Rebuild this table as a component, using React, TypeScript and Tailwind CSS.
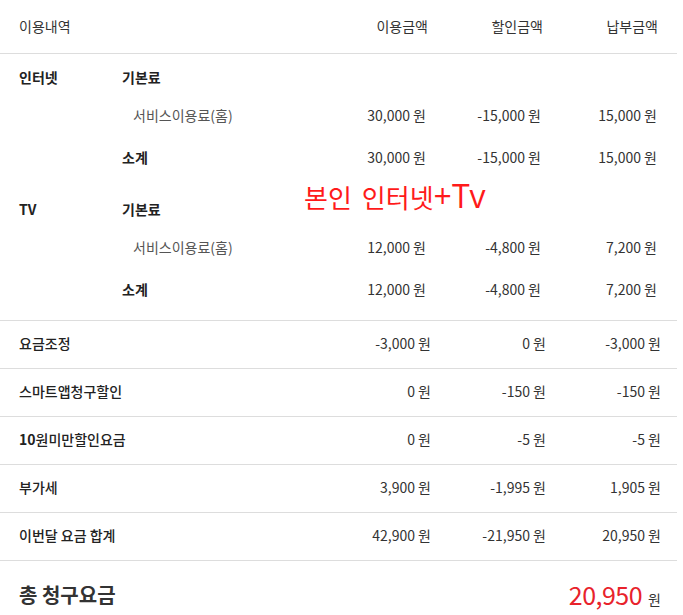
const font = { fontFamily: '"Noto Sans CJK KR", "Noto Sans", sans-serif' };

type Amounts = [string, string, string];

function Nums({ v }: { v: Amounts }) {
  return (
    <>
      {v.map((n, i) => (
        <div key={i} className="text-right text-[14px] text-[#333]">
          {n} 원
        </div>
      ))}
    </>
  );
}

function ServiceBlock({ name, base, sub, className }: { name: string; base: Amounts; sub: Amounts; className: string }) {
  return (
    <div className={className}>
      <div className="grid grid-cols-[103px_1fr_115px_115px_116px] items-center h-[28px]">
        <div className="font-bold text-[14px] text-[#222]">{name}</div>
        <div className="font-bold text-[14px] text-[#222]">기본료</div>
      </div>
      <div className="grid grid-cols-[103px_1fr_115px_115px_116px] items-center h-[48px]">
        <div />
        <div className="pl-[11px] text-[14px] text-[#555]">서비스이용료(홈)</div>
        <Nums v={base} />
      </div>
      <div className="grid grid-cols-[103px_1fr_115px_115px_116px] items-center h-[36px]">
        <div />
        <div className="font-bold text-[14px] text-[#222]">소계</div>
        <Nums v={sub} />
      </div>
    </div>
  );
}

const rows: { label: string; v: Amounts }[] = [
  { label: "요금조정", v: ["-3,000", "0", "-3,000"] },
  { label: "스마트앱청구할인", v: ["0", "-150", "-150"] },
  { label: "10원미만할인요금", v: ["0", "-5", "-5"] },
  { label: "부가세", v: ["3,900", "-1,995", "1,905"] },
  { label: "이번달 요금 합계", v: ["42,900", "-21,950", "20,950"] },
];

export default function App() {
  return (
    <div style={font} className="relative w-[677px] bg-white text-[#333]">
      {/* header */}
      <div className="grid grid-cols-[1fr_115px_115px_115px] items-center h-[54px] border-b border-[#ddd] pl-[19px] pr-[19px] text-[14px]">
        <div>이용내역</div>
        <div className="text-right">이용금액</div>
        <div className="text-right">할인금액</div>
        <div className="text-right">납부금액</div>
      </div>

      <div className="border-b border-[#ddd] pl-[19px] pr-[20px] pb-[13px]">
        <ServiceBlock
          name="인터넷"
          className="pt-[9px]"
          base={["30,000", "-15,000", "15,000"]}
          sub={["30,000", "-15,000", "15,000"]}
        />
        <ServiceBlock
          name="TV"
          className="pt-[20px]"
          base={["12,000", "-4,800", "7,200"]}
          sub={["12,000", "-4,800", "7,200"]}
        />
      </div>

      {rows.map((r) => (
        <div
          key={r.label}
          className="grid grid-cols-[1fr_115px_115px_115px] items-center h-[48px] border-b border-[#ddd] pl-[19px] pr-[16px] pb-[3px]"
        >
          <div className="font-medium text-[14px] text-[#222]">
            {r.label.startsWith("10") ? (
              <>
                <span className="font-bold">10</span>
                {r.label.slice(2)}
              </>
            ) : (
              r.label
            )}
          </div>
          <Nums v={r.v} />
        </div>
      ))}

      {/* total */}
      <div className="flex items-center justify-between h-[68px] pl-[19px] pr-[16px]">
        <div className="font-bold text-[20px] text-[#333]">총 청구요금</div>
        <div className="flex items-baseline gap-[6px]">
          <span className="text-[25px] text-[#e8222b] tracking-[-0.5px]">20,950</span>
          <span className="text-[14px] text-[#333]">원</span>
        </div>
      </div>

      {/* annotation */}
      <div className="absolute left-[304px] top-[180px] flex items-baseline text-[26px] leading-none text-[#ff1a1a] whitespace-pre">
        <span>본인</span>
        <span className="ml-[10px]">인터넷</span>
        <span className="text-[32px]" style={{ fontFamily: '"Open Sans", sans-serif' }}>
          +Tv
        </span>
      </div>
    </div>
  );
}
